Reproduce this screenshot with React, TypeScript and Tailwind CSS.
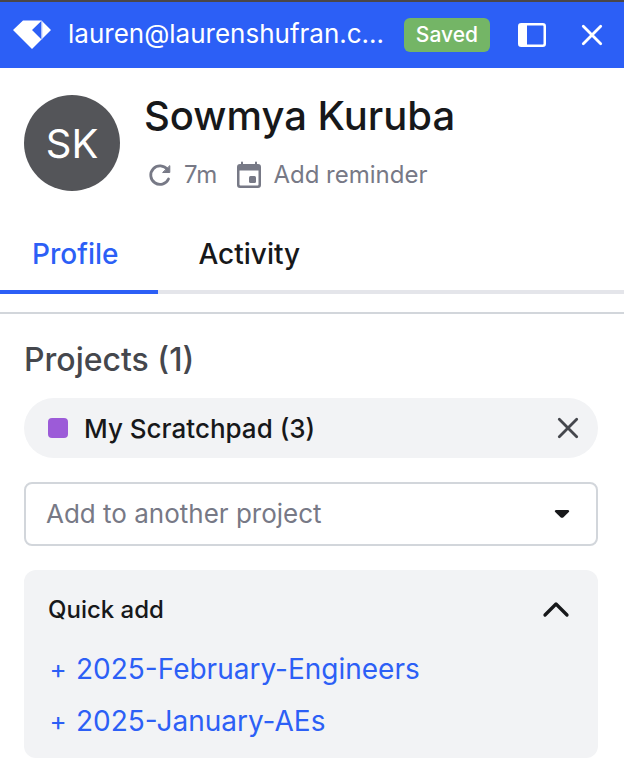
/**
 * ContactPanel
 * Side panel with a contact's summary, tabs and project membership.
 */
import { useState } from 'react';

const quickProjects = ['2025-February-Engineers', '2025-January-AEs'];

function CloseIcon() {
  return (
    <svg className="size-6" viewBox="0 0 24 24" fill="none" stroke="currentColor" strokeWidth="2.800" strokeLinecap="round">
      <path d="M3.300 3.300l17.400 17.400M20.700 3.300L3.300 20.700" />
    </svg>
  );
}

function Header() {
  return (
    <header className="flex h-[68px] items-center border-t-2 border-[#4a4648] bg-[#2c5ff6] px-3 text-white">
      <svg className="h-8 w-10 shrink-0" viewBox="0 0 40 32" fill="currentColor">
        <path fillRule="evenodd" d="M11 1.500h18.500L39 11 20 30 1 11zM29.300 2L20 11l9.300 9.300z" />
        <path d="M29.300 2h1v18.500h-1z" fill="#9db6fb" />
      </svg>
      <span className="ml-4 min-w-0 truncate pb-0.5 text-[26px] leading-8">lauren@laurenshufran.c...</span>
      <span className="ml-auto rounded-md bg-[#74b566] px-3 text-[21px] leading-[34px] font-medium">Saved</span>
      <button type="button" aria-label="Dock panel" className="ml-7">
        <svg className="h-6 w-7" viewBox="0 0 28 24" fill="none" stroke="currentColor" strokeWidth="2.500">
          <rect x="1.250" y="1.250" width="25.500" height="21.500" rx="2" />
          <path d="M1.500 1.500h7.500v21H1.500z" fill="currentColor" stroke="none" />
        </svg>
      </button>
      <button type="button" aria-label="Close panel" className="mr-2 ml-[34px]">
        <CloseIcon />
      </button>
    </header>
  );
}

function ContactSummary() {
  return (
    <section className="flex gap-6 px-6 pt-6">
      <div className="mt-[3px] flex size-24 shrink-0 items-center justify-center rounded-full bg-[#545559] pt-0.5 text-[40px] text-white">
        SK
      </div>
      <div>
        <h1 className="text-[40px] leading-12 font-medium">Sowmya Kuruba</h1>
        <div className="mt-[19px] flex items-center text-2xl leading-8 text-[#777986]">
          <button type="button" className="flex items-center gap-3">
            <svg className="ml-1 size-6" viewBox="0 0 24 24" fill="none" stroke="currentColor" strokeWidth="2.800" strokeLinecap="round" strokeLinejoin="round">
              <path d="M20.500 16A9.300 9.300 0 1 1 19.500 6.500" />
              <path d="M21.800 3v6.500H15z" fill="currentColor" strokeWidth="1" />
            </svg>
            7m
          </button>
          <button type="button" className="ml-5 flex items-center gap-3">
            <svg className="h-7 w-6" viewBox="0 0 24 28" fill="currentColor">
              <path fillRule="evenodd" d="M4 1.500a1 1 0 0 1 2 0V3h12V1.500a1 1 0 0 1 2 0V3h1a3 3 0 0 1 3 3v18a3 3 0 0 1-3 3H3a3 3 0 0 1-3-3V6a3 3 0 0 1 3-3h1zM2.500 9.500V23.500a1 1 0 0 0 1 1h17a1 1 0 0 0 1-1V9.500z" />
              <rect x="12" y="15" width="7" height="7" rx="1.500" />
            </svg>
            Add reminder
          </button>
        </div>
      </div>
    </section>
  );
}

function Tabs() {
  const [tab, setTab] = useState('Profile');

  return (
    <nav role="tablist" className="mt-[25px] flex border-b-4 border-[#e4e5ea] text-[28px] leading-9 font-medium">
      {['Profile', 'Activity'].map((name) => (
        <button
          key={name}
          type="button"
          role="tab"
          aria-selected={tab === name}
          onClick={() => setTab(name)}
          className={
            tab === name
              ? '-mb-1 border-b-4 border-[#2c5ff6] pt-5 pr-10 pb-[18px] pl-8 text-[#2c5ff6]'
              : '-mb-1 border-b-4 border-transparent pt-5 pr-10 pb-[18px] pl-10'
          }
        >
          {name}
        </button>
      ))}
    </nav>
  );
}

function Projects() {
  const [open, setOpen] = useState(true);

  return (
    <section className="mt-[18px] border-t-2 border-[#d2d6db] px-6 pt-6 pr-[26px]">
      <h2 className="text-[32px] leading-11 font-medium text-[#45474d]">Projects (1)</h2>

      <div className="mt-4 flex h-[60px] items-center rounded-full bg-[#f2f3f5] px-6 text-[26px] font-medium">
        <span className="mr-4 size-5 rounded-sm bg-[#9c5bd8]" />
        My Scratchpad (3)
        <button type="button" aria-label="Remove from My Scratchpad" className="-mr-1.5 ml-auto text-[#45474d]">
          <CloseIcon />
        </button>
      </div>

      <div className="relative mt-6">
        <select
          aria-label="Add to another project"
          className="h-16 w-full appearance-none rounded-lg border-2 border-[#d2d6db] bg-white px-5 pb-0.5 text-[26px] text-[#777986]"
        >
          <option>Add to another project</option>
          {quickProjects.map((name) => (
            <option key={name}>{name}</option>
          ))}
        </select>
        <svg className="pointer-events-none absolute top-7 right-7 h-2 w-4" viewBox="0 0 16 8" fill="currentColor">
          <path d="M2 0h12q2 .5 .8 2L9.500 7.200q-1.500 1-3 0L1.200 2Q0 .5 2 0z" />
        </svg>
      </div>

      <div className="mt-6 rounded-xl bg-[#f2f3f5] px-6 pt-5 pb-[11px]">
        <button
          type="button"
          aria-expanded={open}
          onClick={() => setOpen(!open)}
          className="flex w-full items-center justify-between text-2xl leading-10 font-medium"
        >
          Quick add
          <svg className="mr-1 h-5 w-7" viewBox="0 0 28 20" fill="none" stroke="currentColor" strokeWidth="3.300" strokeLinecap="round" strokeLinejoin="round">
            <path d="M3 15L14 4l11 11" />
          </svg>
        </button>
        {open && (
          <ul className="mt-[13px] text-[28px] leading-[52px] text-[#2c5ff6]">
            {quickProjects.map((name) => (
              <li key={name}>
                <button type="button" className="flex items-center gap-2">
                  <span className="w-5 text-[26px]">+</span>
                  {name}
                </button>
              </li>
            ))}
          </ul>
        )}
      </div>
    </section>
  );
}

export default function App() {
  return (
    <main className="min-h-screen bg-white pb-3.5 font-['Inter',sans-serif] text-[#17181a]">
      <Header />
      <ContactSummary />
      <Tabs />
      <Projects />
    </main>
  );
}
